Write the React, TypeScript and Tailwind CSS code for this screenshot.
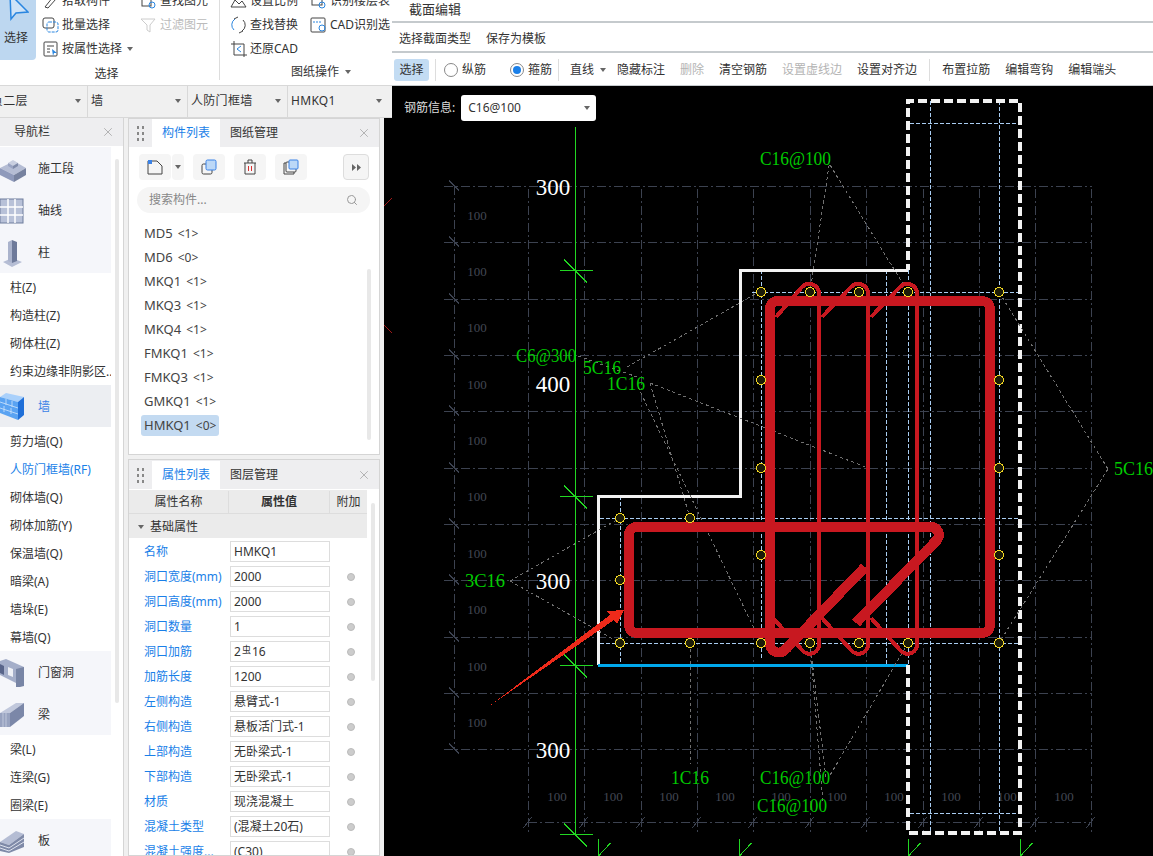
import React from 'react';
import { X, Search } from 'lucide-react';

const Caret = ({ className = '' }: { className?: string }) => (
  <span className={`inline-block w-0 h-0 border-x-[3px] border-x-transparent border-t-[4px] border-t-[#666] ${className}`} />
);

const Grip = () => (
  <div className="grid grid-cols-2 gap-x-[3px] gap-y-[3px] w-[7px]">
    {[0, 1, 2, 3, 4, 5].map((i) => (
      <span key={i} className="w-[2px] h-[3px] bg-[#888]" />
    ))}
  </div>
);

const IconBox = ({ children }: { children: React.ReactNode }) => (
  <svg width="18" height="18" viewBox="0 0 18 18" fill="none" stroke="#444" strokeWidth="1" className="shrink-0">
    {children}
  </svg>
);

// ribbon entries, first row is cut off by the window top
const RibbonBtn = ({ icon, label, grey, caret }: { icon: React.ReactNode; label: string; grey?: boolean; caret?: boolean }) => (
  <div className={`h-6 flex items-center gap-[1px] whitespace-nowrap ${grey ? 'text-[#bbb]' : 'text-[#333]'}`}>
    {icon}
    <span className="ml-[1px]">{label}</span>
    {caret && <Caret className="ml-[4px]" />}
  </div>
);

const categoryIcon = (name: string) => {
  if (name === '施工段')
    return (
      <svg width="28" height="28" viewBox="0 0 28 28">
        <path d="M0 13 L14 6 L26 13 L14 20 Z" fill="#b5bdd4" />
        <path d="M0 13 L14 20 V27 L0 20 Z" fill="#8f9abb" />
        <path d="M14 20 L26 13 V20 L14 27 Z" fill="#77829f" />
        <path d="M8 8 L13 5 L18 8 L13 11 Z" fill="#c9cfe0" />
        <path d="M8 8 L13 11 V14 L8 11 Z" fill="#9aa4c2" />
        <path d="M13 11 L18 8 V11 L13 14 Z" fill="#7f8aa8" />
      </svg>
    );
  if (name === '轴线')
    return (
      <svg width="24" height="26" viewBox="0 0 24 26">
        <rect x="0" y="1" width="23" height="24" fill="#b8c1d8" stroke="#6f7c9c" />
        <path d="M8 1 V25 M15 1 V25 M0 9 H23 M0 17 H23" stroke="#fff" strokeWidth="1.5" />
      </svg>
    );
  if (name === '柱')
    return (
      <svg width="24" height="28" viewBox="0 0 24 28">
        <path d="M3 23 L12 19 L22 23 L12 28 Z" fill="#b5bdd4" />
        <path d="M8 3 L12 1 V24 L8 22 Z" fill="#aab3cc" />
        <path d="M12 1 L17 3 V22 L12 24 Z" fill="#6e7a9a" />
      </svg>
    );
  if (name === '墙')
    return (
      <svg width="26" height="28" viewBox="0 0 26 28">
        <path d="M0 4 L18 9 L24 4 L6 0 Z" fill="#a9d0fb" />
        <path d="M0 4 L18 9 V27 L0 20 Z" fill="#5aa3f2" />
        <path d="M18 9 L24 4 V22 L18 27 Z" fill="#1f6fd8" />
        <path d="M0 9 L18 15 M0 15 L18 21 M6 6 V12 M12 8 V14 M4 13 V19 M11 15 V21" stroke="#cfe4fb" strokeWidth="0.8" />
      </svg>
    );
  if (name === '门窗洞')
    return (
      <svg width="26" height="28" viewBox="0 0 26 28">
        <path d="M0 2 L6 0 L24 8 V27 L16 26 V24 L0 16 Z" fill="#a4aec9" />
        <path d="M16 10 L24 8 V27 L16 29 Z" fill="#7885a5" />
        <path d="M8 8 L13 10 V18 L8 16 Z" fill="#eef0f6" />
        <path d="M0 5 L4 7 V16 L0 14 Z" fill="#59658a" />
      </svg>
    );
  if (name === '梁')
    return (
      <svg width="26" height="26" viewBox="0 0 26 26">
        <path d="M0 11 L16 1 L24 1 L10 11 Z" fill="#c1c8dc" />
        <path d="M0 11 H10 V25 H0 Z" fill="#98a3c0" />
        <path d="M10 11 L24 1 V14 L10 25 Z" fill="#7b87a8" />
        <path d="M3 11 V25 M6 11 V25" stroke="#c9d0e2" strokeWidth="0.8" />
      </svg>
    );
  return (
    <svg width="26" height="24" viewBox="0 0 26 24">
      <path d="M0 13 L16 2 L24 5 L9 16 Z" fill="#b5bdd4" />
      <path d="M0 13 L9 16 L24 5 V18 L9 24 L0 22 Z" fill="#7f8aa8" />
      <path d="M0 16 L9 19 L24 9 M0 19 L9 22 L24 13" stroke="#dfe3ee" strokeWidth="1" fill="none" />
    </svg>
  );
};

type NavItem = { name: string; cat?: boolean; active?: boolean; blue?: boolean };
const navItems: NavItem[] = [
  { name: '施工段', cat: true },
  { name: '轴线', cat: true },
  { name: '柱', cat: true },
  { name: '柱(Z)' },
  { name: '构造柱(Z)' },
  { name: '砌体柱(Z)' },
  { name: '约束边缘非阴影区..' },
  { name: '墙', cat: true, active: true },
  { name: '剪力墙(Q)' },
  { name: '人防门框墙(RF)', blue: true },
  { name: '砌体墙(Q)' },
  { name: '砌体加筋(Y)' },
  { name: '保温墙(Q)' },
  { name: '暗梁(A)' },
  { name: '墙垛(E)' },
  { name: '幕墙(Q)' },
  { name: '门窗洞', cat: true },
  { name: '梁', cat: true },
  { name: '梁(L)' },
  { name: '连梁(G)' },
  { name: '圈梁(E)' },
  { name: '板', cat: true },
];

const components = ['MD5 <1>', 'MD6 <0>', 'MKQ1 <1>', 'MKQ3 <1>', 'MKQ4 <1>', 'FMKQ1 <1>', 'FMKQ3 <1>', 'GMKQ1 <1>', 'HMKQ1 <0>'];

const props: [string, React.ReactNode][] = [
  ['名称', 'HMKQ1'],
  ['洞口宽度(mm)', '2000'],
  ['洞口高度(mm)', '2000'],
  ['洞口数量', '1'],
  ['洞口加筋', <>2<span className="text-[9px] mx-[1px] relative -top-[2px]">虫</span>16</>],
  ['加筋长度', '1200'],
  ['左侧构造', '悬臂式-1'],
  ['右侧构造', '悬板活门式-1'],
  ['上部构造', '无卧梁式-1'],
  ['下部构造', '无卧梁式-1'],
  ['材质', '现浇混凝土'],
  ['混凝土类型', '(混凝土20石)'],
  ['混凝土强度...', '(C30)'],
];

const PanelHeader = ({ a, b }: { a: string; b: string }) => (
  <div className="h-7 shrink-0 bg-[#eeeef0] flex items-center text-[#333]">
    <div className="w-[23px] flex justify-center"><Grip /></div>
    <div className="w-[68px] h-full bg-white text-[#1a7fe8] flex items-center justify-center">{a}</div>
    <div className="w-[68px] flex items-center justify-center">{b}</div>
    <X size={14} strokeWidth={1} className="ml-auto mr-[8px] text-[#888]" />
  </div>
);

const ToolBtn = ({ children, className = 'w-8' }: { children: React.ReactNode; className?: string }) => (
  <div className={`h-[26px] bg-[#f5f5f5] rounded flex items-center justify-center ${className}`}>{children}</div>
);

const Ribbon = () => (
  <div className="h-[85px] shrink-0 bg-white flex overflow-hidden text-[12px]">
    <div className="w-[36px] h-[60px] bg-[#bdd7f0] rounded-br-[4px] flex flex-col items-center">
      <svg width="26" height="24" viewBox="0 0 26 24" className="-ml-1">
        <path d="M7 -6 L25 12 L13 13 L8 19 Z" fill="#cfe3f7" stroke="#2a86e0" strokeWidth="1.5" />
      </svg>
      <span className="mt-[5px] -ml-[4px] text-[#333]">选择</span>
    </div>
    <div className="w-[184px] pl-[6px] border-r border-r-[#ddd] h-[80px] relative">
      <div className="flex -mt-[11px]">
        <div className="w-[98px]">
          <RibbonBtn label="拾取构件" icon={<IconBox><path d="M3 15 L11 5 L14 7 L6 16 Z" /></IconBox>} />
          <RibbonBtn label="批量选择" icon={<IconBox><rect x="1" y="2" width="11" height="10" rx="2" /><rect x="5" y="6" width="11" height="10" rx="2" stroke="#2a86e0" strokeDasharray="3 1" /></IconBox>} />
          <RibbonBtn caret label="按属性选择" icon={<IconBox><rect x="2" y="2" width="13" height="14" rx="1" /><path d="M5 6 H12 M5 9 H8 M5 12 H8" /><path d="M10 9 L15 13 L12 13 L11 16 Z" fill="#2a86e0" stroke="none" /></IconBox>} />
        </div>
        <div>
          <RibbonBtn label="查找图元" icon={<IconBox><rect x="2" y="2" width="9" height="12" /><circle cx="12" cy="13" r="3" stroke="#2a86e0" /></IconBox>} />
          <RibbonBtn grey label="过滤图元" icon={<IconBox><path d="M1 3 H15 L10 9 V16 L7 14 V9 Z" stroke="#ccc" /></IconBox>} />
        </div>
      </div>
      <div className="absolute left-0 right-0 top-[65px] text-center text-[#333] pr-[42px]">选择</div>
    </div>
    <div className="flex-1 pl-[10px] relative">
      <div className="flex -mt-[11px]">
        <div className="w-[80px] shrink-0">
          <RibbonBtn label="设置比例" icon={<IconBox><path d="M1 15 L5 8 L9 12 L12 9 L16 15 Z" /></IconBox>} />
          <RibbonBtn label="查找替换" icon={<IconBox><path d="M5 3 A7 7 0 0 0 4 14" stroke="#2a86e0" /><path d="M12 15 A7 7 0 0 0 13 4" /><path d="M4 3 L8 1 M13 15 L9 17" /></IconBox>} />
          <RibbonBtn label="还原CAD" icon={<IconBox><path d="M4 1 V15 H17 M1 4 H14 V17" /><path d="M11 6 L7 9 L11 12" stroke="#2a86e0" /></IconBox>} />
        </div>
        <div className="whitespace-nowrap">
          <RibbonBtn label="识别楼层表" icon={<IconBox><rect x="2" y="3" width="10" height="10" /><circle cx="12" cy="13" r="3" stroke="#2a86e0" /></IconBox>} />
          <RibbonBtn label="CAD识别选" icon={<IconBox><rect x="1" y="2" width="14" height="14" rx="1" /><path d="M3 6 H12" stroke="#2a86e0" strokeDasharray="2 1" /><circle cx="12" cy="12" r="3" stroke="#2a86e0" /></IconBox>} />
        </div>
      </div>
      <div className="absolute left-[71px] top-[63px] flex items-center text-[#333]">图纸操作<Caret className="ml-[6px]" /></div>
    </div>
  </div>
);

const SelectorBar = () => (
  <div className="h-[33px] shrink-0 bg-[#f0f0f0] border-y border-y-[#d8d8d8] flex text-[12px] text-[#333]">
    {[['负二层', 'w-[88px] border-r border-r-[#d8d8d8]', '-ml-[12px]'], ['墙', 'w-[100px] border-r border-r-[#d8d8d8]', ''], ['人防门框墙', 'w-[100px] border-r border-r-[#d8d8d8]', ''], ['HMKQ1', 'w-[100px]', '']].map(([t, w, m], i) => (
      <div key={i} className={`${w} flex items-center justify-between pl-[3px] pr-[6px] pb-[2px] overflow-hidden`}>
        <span className={`${m} whitespace-nowrap tracking-[0.3px]`}>{t}</span>
        <Caret />
      </div>
    ))}
  </div>
);

const NavPanel = () => (
  <div className="w-[124px] shrink-0 bg-white border-r border-r-[#d5d5d5] flex flex-col overflow-hidden text-[12px] text-[#333]">
    <div className="h-7 shrink-0 bg-[#eeeef0] flex items-center pl-[14px] pr-[8px] justify-between">
      <span>导航栏</span>
      <X size={14} strokeWidth={1} className="text-[#888]" />
    </div>
    <div className="flex relative pt-[1px]">
      <div className="w-[111px] shrink-0">
        {navItems.map((it) =>
          it.cat ? (
            <div key={it.name} className={`h-[42px] flex items-center pt-[1px] ${it.active ? 'bg-[#eceef2]' : 'bg-[#f5f6fa]'}`}>
              <div className="w-[38px] shrink-0">{categoryIcon(it.name)}</div>
              <span className={it.active ? 'text-[#3b82e6]' : ''}>{it.name}</span>
            </div>
          ) : (
            <div key={it.name} className={`h-7 flex items-center pt-[1px] pl-[10px] whitespace-nowrap overflow-hidden ${it.blue ? 'text-[#1a7fe8]' : ''}`}>{it.name}</div>
          )
        )}
      </div>
      <div className="w-[4px] ml-[4px] mt-[12px] h-[544px] bg-[#e8e8e8] rounded-full" />
    </div>
  </div>
);

const ComponentList = () => (
  <div className="h-[337px] shrink-0 bg-white border border-[#d5d5d5] flex flex-col text-[12px] text-[#333]">
    <PanelHeader a="构件列表" b="图纸管理" />
    <div className="flex items-center mt-[7px] pl-[10px] pr-[10px]">
      <ToolBtn className="w-[32px]">
        <svg width="16" height="16" viewBox="0 0 16 16" fill="none">
          <path d="M1 2 H10 L15 7 V15 H1 Z" stroke="#444" />
          <rect x="1" y="1" width="4" height="4" fill="#3b82e6" />
        </svg>
      </ToolBtn>
      <ToolBtn className="w-[12px] ml-[1px]"><Caret /></ToolBtn>
      <ToolBtn className="w-[32px] ml-[9px]">
        <svg width="16" height="16" viewBox="0 0 16 16" fill="none">
          <rect x="1" y="5" width="10" height="10" rx="1.5" stroke="#444" />
          <rect x="5" y="1" width="10" height="10" rx="1.5" fill="#bcd8f7" stroke="#3b82e6" />
        </svg>
      </ToolBtn>
      <ToolBtn className="w-[32px] ml-[9px]">
        <svg width="14" height="16" viewBox="0 0 14 16" fill="none">
          <path d="M1 4 H13 M5 4 V1 H9 V4 M2 4 V15 H12 V4" stroke="#444" />
          <path d="M5.5 7 V12 M8.5 7 V12" stroke="#d83030" />
        </svg>
      </ToolBtn>
      <ToolBtn className="w-[32px] ml-[9px]">
        <svg width="16" height="16" viewBox="0 0 16 16" fill="none">
          <path d="M3 4 H1 V15 H11 V13" stroke="#444" />
          <rect x="3" y="3" width="10" height="10" rx="1" stroke="#444" />
          <rect x="6" y="1" width="9" height="9" rx="1" fill="#bcd8f7" stroke="#3b82e6" />
        </svg>
      </ToolBtn>
      <div className="ml-auto w-[26px] h-[26px] bg-[#f5f5f5] border border-[#ddd] rounded flex items-center justify-center">
        <svg width="9" height="7" viewBox="0 0 9 7"><path d="M0 0 L4 3.5 L0 7 Z M5 0 L9 3.5 L5 7 Z" fill="#666" /></svg>
      </div>
    </div>
    <div className="ml-[8px] mr-[9px] mt-[7px] h-[26px] shrink-0 rounded-full bg-[#f5f5f5] flex items-center px-[12px] justify-between text-[#888]">
      <span>搜索构件...</span>
      <Search size={12} className="text-[#999]" />
    </div>
    <div className="flex flex-1 mt-[8px] relative">
      <div className="flex-1 pl-[12px] text-[13px] text-[#444]">
        {components.map((c) => {
          const sel = c.startsWith('HMKQ1');
          const [n, v] = c.split(' ');
          return (
            <div key={c} className="h-6 flex items-center">
              <span className={`px-[3px] h-[21px] leading-[21px] rounded-[3px] whitespace-nowrap ${sel ? 'bg-[#c3daf1]' : ''}`}>
                {n}<span className="ml-[5px] text-[12px]">{v}</span>
              </span>
            </div>
          );
        })}
      </div>
      <div className="absolute right-[8px] top-[48px] w-[4px] h-[171px] bg-[#e8e8e8] rounded-full" />
    </div>
  </div>
);

const PropertyList = () => (
  <div className="flex-1 mt-[4px] bg-white border border-[#d5d5d5] flex flex-col text-[12px] text-[#333] overflow-hidden">
    <div className="pt-[1px] bg-[#eeeef0]"><PanelHeader a="属性列表" b="图层管理" /></div>
    <div className="flex-1 relative overflow-hidden">
      <div className="w-[238px]">
        <div className="h-[24px] mt-[1px] pt-[1px] flex bg-[#ebebeb] border-b border-b-[#ddd]">
          <div className="w-[100px] flex items-center justify-center border-r border-r-[#ddd]">属性名称</div>
          <div className="w-[101px] flex items-center justify-center border-r border-r-[#ddd] font-bold">属性值</div>
          <div className="flex-1 flex items-center justify-center">附加</div>
        </div>
        <div className="h-[24px] pt-[1px] flex items-center bg-[#ebebeb] pl-[9px]">
          <Caret className="mr-[6px]" />基础属性
        </div>
      </div>
      <div className="pt-[1px]">
        {props.map(([k, v], i) => (
          <div key={k} className="h-[25px] flex items-center shrink-0">
            <div className="w-[101px] pl-[15px] text-[#1a7fe8] whitespace-nowrap">{k}</div>
            <div className="w-[100px] h-[21px] border border-[#ddd] flex items-center pl-[3px] whitespace-nowrap">{v}</div>
            {i > 0 && <span className="ml-[17px] w-[8px] h-[8px] rounded-full bg-[#ccc] border border-[#bbb]" />}
          </div>
        ))}
      </div>
      <div className="absolute right-[4px] top-[14px] w-[4px] h-[178px] bg-[#e8e8e8] rounded-full" />
    </div>
  </div>
);

const Tool = ({ label, grey, className = '' }: { label: string; grey?: boolean; className?: string }) => (
  <span className={`whitespace-nowrap ${grey ? 'text-[#b4b4b4]' : 'text-[#333]'} ${className}`}>{label}</span>
);

const Radio = ({ on }: { on?: boolean }) => (
  <span className="w-[14px] h-[14px] rounded-full border border-[#888] bg-white flex items-center justify-center">
    {on && <span className="w-[8px] h-[8px] rounded-full bg-[#1a7fe8]" />}
  </span>
);

const EditorBars = () => (
  <div className="shrink-0 bg-white text-[12px] text-[#333]">
    <div className="h-[21px] pl-[17px] pb-[2px] flex items-center text-[13px]">截面编辑</div>
    <div className="h-[32px] border-y-2 border-y-[#c5cacd] flex items-center pl-[7px] pt-[3px] gap-[15px]">
      <Tool label="选择截面类型" />
      <Tool label="保存为模板" />
    </div>
    <div className="h-[33px] flex items-center pt-[2px] border-b border-b-[#c5cacd]">
      <span className="ml-[2px] w-[35px] h-[22px] bg-[#c3dcf3] rounded-[3px] flex items-center justify-center">选择</span>
      <span className="ml-[6px] w-px h-[22px] bg-[#ddd]" />
      <span className="ml-[8px]"><Radio /></span>
      <Tool label="纵筋" className="ml-[4px]" />
      <span className="ml-[24px]"><Radio on /></span>
      <Tool label="箍筋" className="ml-[4px]" />
      <span className="ml-[6px] w-px h-[22px] bg-[#ddd]" />
      <Tool label="直线" className="ml-[11px]" />
      <Caret className="ml-[6px]" />
      <Tool label="隐藏标注" className="ml-[11px]" />
      <Tool label="删除" grey className="ml-[15px]" />
      <Tool label="清空钢筋" className="ml-[15px]" />
      <Tool label="设置虚线边" grey className="ml-[15px]" />
      <Tool label="设置对齐边" className="ml-[15px]" />
      <span className="ml-[12px] w-px h-[22px] bg-[#ddd]" />
      <Tool label="布置拉筋" className="ml-[12px]" />
      <Tool label="编辑弯钩" className="ml-[15px]" />
      <Tool label="编辑端头" className="ml-[15px]" />
    </div>
  </div>
);

const gridY = [186.5, 242.5, 299.5, 355.5, 411.5, 468.5, 524.5, 580.5, 637.5, 693.5, 749.5];
const gridX = [528.5, 584.5, 641.5, 697.5, 753.5, 810.5, 866.5, 923.5, 979.5, 1035.5, 1091.5];
const leftDims = [215, 271, 327, 384, 440, 496, 553, 609, 666, 722];
const bottomDims = [557, 613, 669, 725, 781, 837, 894, 951, 1007, 1064];
const pins = [
  [761, 292], [810, 292], [859, 292], [908, 292], [999, 292],
  [761, 380], [999, 380], [761, 468], [999, 468],
  [620, 518], [690, 518], [761, 555], [999, 555], [620, 580],
  [620, 643], [690, 643], [761, 643], [810, 643], [859, 643], [908, 643], [999, 643],
];
const leaders = [
  'M578 356 L640 378', 'M627 367 L757 293', 'M650 383 L868 468', 'M638 387 L761 643', 'M650 383 L690 518',
  'M830 159 L810 292', 'M830 165 L908 292', 'M1108 469 L999 292', 'M1108 469 L999 643',
  'M908 643 L829 777', 'M810 643 L826 778', 'M810 643 L823 802', 'M690 643 V764',
  'M510 581 L620 518', 'M510 581 L620 643',
];
const greens: [string, number, number, number][] = [
  ['C16@100', 760, 165, 71], ['C6@300', 516, 362, 60], ['5C16', 583, 374, 38], ['1C16', 607, 390, 38],
  ['3C16', 465, 587, 40], ['5C16', 1114, 475, 39], ['1C16', 671, 784, 38], ['C16@100', 760, 784, 70], ['C16@100', 757, 812, 70],
];
const greenTicks = [270.5, 496.5, 665.5, 834.5];

const Drawing = () => (
  <svg width="761" height="770" viewBox="392 86 761 770" className="block" shapeRendering="crispEdges">
    <g stroke="#3c4250" strokeWidth="1" strokeDasharray="9 3 2 3" fill="none">
      {gridY.map((y) => <path key={y} d={`M444 ${y} H1092`} />)}
      <path d="M528 822.5 H1092" />
      <path d="M454.5 186 V750" />
      {gridX.map((x) => <path key={x} d={`M${x} 189 V832`} />)}
    </g>
    <g stroke="#3c4250" strokeWidth="1">
      {gridY.map((y) => <path key={y} d={`M449 ${y - 6} L459 ${y + 4}`} />)}
      {gridX.map((x) => <path key={x} d={`M${x - 5} 828 L${x + 3} 817`} />)}
    </g>
    <g fontFamily="'Liberation Serif', serif" fontSize="13" fill="#434854" textAnchor="middle">
      {leftDims.map((y) => <text key={y} x="477" y={y + 4.5}>100</text>)}
      {bottomDims.map((x) => <text key={x} x={x} y="800.5">100</text>)}
    </g>
    <g stroke="#a9cdf2" strokeWidth="1" strokeDasharray="4 2" fill="none">
      <path d="M752 292.5 H1018 M600 518.5 H1020 M600 643.5 H1020 M910 123.5 H1020 M910 813.5 H1020" />
      <path d="M761.5 270 V660 M620.5 496 V665 M886.5 270 V665 M908.5 270 V665 M930.5 101 V833 M999.5 101 V833" />
    </g>
    <path d="M575.5 127 V834" stroke="#22d622" strokeWidth="1" />
    {greenTicks.map((y) => (
      <path key={y} d={`M560 ${y} H593 M564 ${y - 11} L587 ${y + 12}`} stroke="#22d622" strokeWidth="1" fill="none" />
    ))}
    {[598.5, 739.5, 908.5, 1020.5].map((x) => (
      <path key={x} d={`M${x} 856 V839 M${x} 856 L${x + 12} 843`} stroke="#22d622" strokeWidth="1" fill="none" />
    ))}
    <path d="M908 270.5 H740.5 V496.5 H598.5 V665" stroke="#f2f2f2" strokeWidth="3" fill="none" />
    <path d="M598 665.5 H908" stroke="#00a8ec" strokeWidth="3" fill="none" />
    <path d="M908 665 V833 H1020 V101 H908 V270" stroke="#f2f2f2" strokeWidth="4" strokeDasharray="9 4" fill="none" />
    <g stroke="#707070" strokeWidth="1" strokeDasharray="3 3" fill="none">
      {leaders.map((d) => <path key={d} d={d} />)}
    </g>
    <g stroke="#c81820" fill="none">
      <g strokeWidth="4">
        <path d="M776 317 L802 287 A10 10 0 0 1 819 292 V643 A9.5 9.5 0 0 1 802 650 L773 618" />
        <path d="M822 317 L851 287 A10 10 0 0 1 868 292 V643 A9.5 9.5 0 0 1 851 650 L822 618" />
        <path d="M871 317 L900 287 A10 10 0 0 1 917 292 V643 A9.5 9.5 0 0 1 900 650 L871 618" />
      </g>
      <g strokeWidth="10">
        <path d="M770 309 A8 8 0 0 1 778 301 H982 A8 8 0 0 1 990 309 V625 A8 8 0 0 1 982 633 H637 A8 8 0 0 1 629 625 V535 A8 8 0 0 1 637 527 H930 A8 8 0 0 1 937 540 L856 623" />
        <path d="M770 309 V642 A9 9 0 0 0 786 649 L865 567" />
      </g>
    </g>
    <g stroke="#f2d722" strokeWidth="1.2" fill="#1c1c08">
      {pins.map(([x, y]) => <circle key={`${x}-${y}`} cx={x} cy={y} r="4.4" />)}
    </g>
    <path d="M488 707 L610 615 L607 611 L624 610 L617 624 L614 620 Z" fill="#ee2a1a" />
    <g fontFamily="'Liberation Serif', serif" fontSize="23" fill="#ffffff" textAnchor="middle">
      <text x="553" y="195">300</text>
      <text x="553" y="392">400</text>
      <text x="553" y="589">300</text>
      <text x="553" y="758">300</text>
    </g>
    <g fontFamily="'Liberation Serif', serif" fontSize="18" fill="#00cc00">
      {greens.map(([t, x, y, w]) => (
        <text key={`${t}-${x}-${y}`} x={x} y={y} textLength={w} lengthAdjust="spacingAndGlyphs">{t}</text>
      ))}
    </g>
  </svg>
);

export default function App() {
  return (
    <div className="w-[1153px] h-[856px] flex overflow-hidden bg-black [font-family:'Noto_Sans','Noto_Sans_CJK_SC',sans-serif]">
      <div className="w-[392px] shrink-0 flex flex-col">
        <Ribbon />
        <SelectorBar />
        <div className="flex-1 min-h-0 flex bg-[#f0f0f0]">
          <NavPanel />
          <div className="ml-[4px] w-[252px] shrink-0 flex flex-col">
            <ComponentList />
            <PropertyList />
          </div>
          <div className="ml-[4px] flex-1 bg-black">
            <svg width="8" height="738" viewBox="0 0 8 738" className="block">
              <path d="M0 88 L8 80 M0 207 L8 215" stroke="#a01818" strokeWidth="1" />
            </svg>
          </div>
        </div>
      </div>
      <div className="flex-1 flex flex-col min-w-0">
        <EditorBars />
        <div className="flex-1 relative bg-black overflow-hidden">
          <Drawing />
          <div className="absolute left-[12px] top-[9px] flex items-center text-[12px] text-[#ddd]">
            钢筋信息:
            <div className="ml-[6px] w-[135px] h-[26px] bg-white rounded-[3px] flex items-center justify-between pl-[7px] pr-[6px] text-[#333]">
              C16@100<Caret />
            </div>
          </div>
        </div>
      </div>
    </div>
  );
}
